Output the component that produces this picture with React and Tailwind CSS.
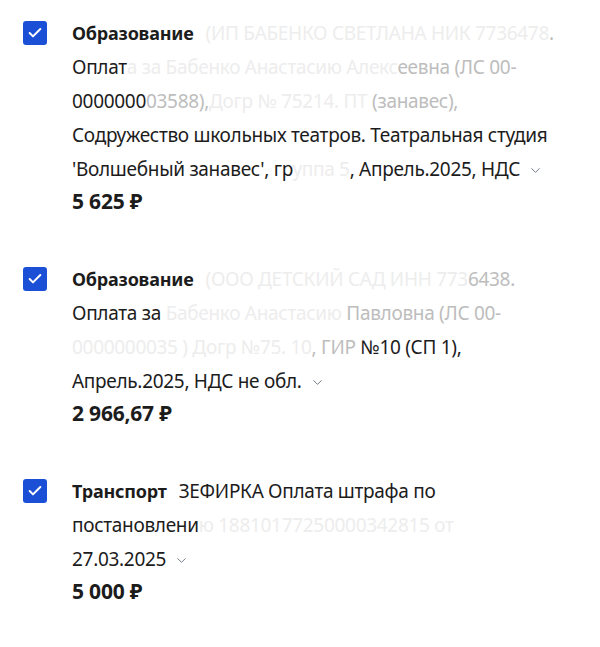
import { Check, ChevronDown } from 'lucide-react';

const font = { fontFamily: '"Noto Sans", "Open Sans", sans-serif' };

function Box() {
    return (
        <div className="w-[24px] h-[24px] mt-[5px] rounded-[3px] bg-[#1a4fd6] flex items-center justify-center shrink-0">
            <Check className="w-[16px] h-[16px] text-white" strokeWidth={3} />
        </div>
    );
}

function Chev() {
    return <ChevronDown className="inline-block w-[15px] h-[15px] ml-[8px] text-gray-500 align-middle" strokeWidth={1.5} />;
}

// faded = part of the text hidden in the screenshot
const F = ({ children }) => <span className="text-[#ededed]">{children}</span>;
const G = ({ children }) => <span className="text-[#bdbdbd]">{children}</span>;

function Item({ title, lines, amount }) {
    return (
        <div className="flex gap-[25px]">
            <Box />
            <div className="text-[19px] leading-[34px] text-[#1c1c1c] tracking-[-0.3px]">
                {lines.map((l, i) => (
                    <div key={i} className="whitespace-nowrap">
                        {i === 0 && <span className="font-bold text-[18px] tracking-[-0.2px] mr-[12px]">{title}</span>}
                        {l}
                    </div>
                ))}
                <div className="font-bold text-[21px] tracking-[-0.2px] mt-[-2px]">{amount}</div>
            </div>
        </div>
    );
}

export default function App() {
    return (
        <div className="bg-white min-h-screen pl-[23px] pt-[16px] flex flex-col gap-[44px]" style={font}>
            <Item
                title="Образование"
                lines={[
                    <><F>(ИП БАБЕНКО СВЕТЛАНА НИК 7736478</F><G>.</G></>,
                    <>Оплат<F>а за Бабенко Анастасию Алекс</F><G>еевна (ЛС 00-</G></>,
                    <>0000000<G>03588),</G><F>Догр № 75214. ПТ </F><G>(занавес),</G></>,
                    <>Содружество школьных театров. Театральная студия</>,
                    <>'Волшебный занавес', гр<F>уппа 5</F>, Апрель.2025, НДС<Chev /></>,
                ]}
                amount="5 625 ₽"
            />
            <Item
                title="Образование"
                lines={[
                    <><F>(ООО ДЕТСКИЙ САД ИНН 773</F><G>6438.</G></>,
                    <>Оплата за <F>Бабенко Анастасию</F><G> Павловна (ЛС 00-</G></>,
                    <><F>0000000035 ) Догр №75. 10</F><G>, ГИР </G>№10 (СП 1),</>,
                    <>Апрель.2025, НДС не обл.<Chev /></>,
                ]}
                amount="2 966,67 ₽"
            />
            <Item
                title="Транспорт"
                lines={[
                    <>ЗЕФИРКА Оплата штрафа по</>,
                    <>постановлени<F>ю 18810177250000342815 от</F></>,
                    <>27.03.2025<Chev /></>,
                ]}
                amount="5 000 ₽"
            />
        </div>
    );
}
